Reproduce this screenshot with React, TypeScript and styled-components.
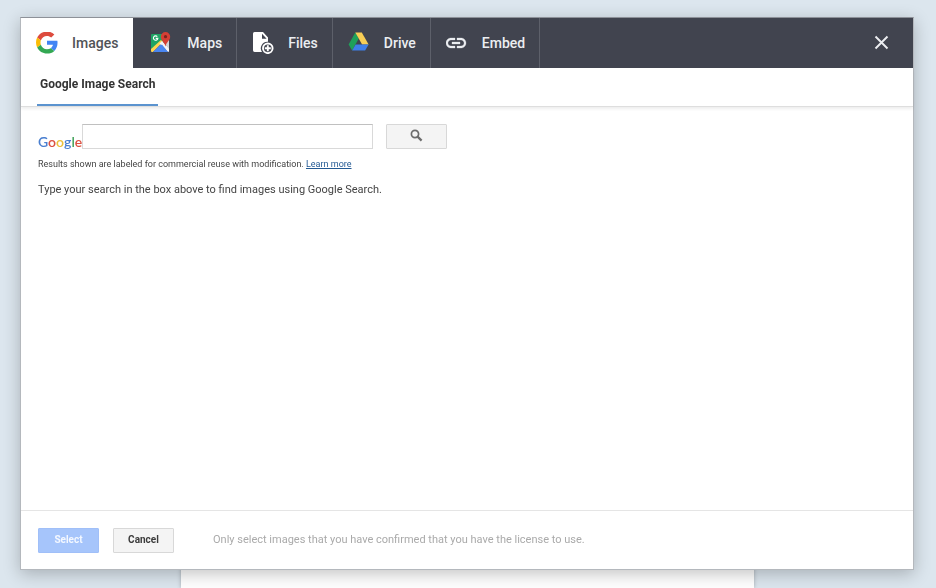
import React from "react";
import styled, { createGlobalStyle, css } from "styled-components";

const GlobalStyle = createGlobalStyle`
  *, *::before, *::after { box-sizing: border-box; }
  html, body, #root { height: 100%; }
  body {
    margin: 0;
    background: #dce6ee;
    font-family: Roboto, "Liberation Sans", sans-serif;
    color: #444;
  }
  button, input { font: inherit; }
`;

const Page = styled.div`
  height: 100%;
  padding: 100px 182px 0 181px;
  overflow: hidden;
`;

const Sheet = styled.div`
  height: 100%;
  background: #fff;
  box-shadow: 0 0 4px rgba(0, 0, 0, 0.25);
`;

const Overlay = styled.div`
  position: fixed;
  inset: 0;
  display: flex;
  padding: 17px 22px 18px 20px;
`;

const Dialog = styled.section`
  flex: 1;
  min-width: 0;
  display: flex;
  flex-direction: column;
  background: #fff;
  border: 1px solid #b4b8bd;
  border-top-color: #8d9198;
  box-shadow: 0 4px 16px rgba(0, 0, 0, 0.24);
`;

const Header = styled.header`
  display: flex;
  height: 50px;
  flex: none;
  background: #41444f;
`;

const TabList = styled.nav`
  display: flex;
`;

const Tab = styled.button<{ $active?: boolean }>`
  display: flex;
  align-items: center;
  gap: 14px;
  padding: 0 14px 0 15px;
  border: 0;
  border-right: 1px solid #5d606a;
  background: transparent;
  color: #eceef1;
  font-size: 14px;
  font-weight: 500;
  line-height: 20px;
  cursor: pointer;
  ${(p) =>
    p.$active &&
    css`
      background: #fff;
      border-right-color: #fff;
      color: #505357;
    `}
`;

const TabIcon = styled.svg<{ $wide?: boolean }>`
  width: ${(p) => (p.$wide ? 25 : 22)}px;
  height: 22px;
  flex: none;
`;

const CloseButton = styled.button`
  display: flex;
  align-items: center;
  margin-left: auto;
  padding: 0 24px 2px;
  border: 0;
  background: transparent;
  color: #eceef1;
  cursor: pointer;
`;

const SubNav = styled.nav`
  display: flex;
  flex: none;
  height: 39px;
  padding: 0 16px;
  border-bottom: 1px solid #dedede;
  box-shadow: 0 2px 3px rgba(0, 0, 0, 0.07);
`;

const SubTab = styled.button`
  padding: 0 3px 4px;
  border: 0;
  border-bottom: 2px solid #5b93cf;
  background: transparent;
  color: #333;
  font-size: 12px;
  font-weight: 700;
  line-height: 16px;
  cursor: pointer;
`;

const Content = styled.main`
  flex: 1;
  min-height: 0;
  padding: 17px;
`;

const SearchForm = styled.form`
  display: flex;
  align-items: flex-end;
`;

const Brand = styled.span`
  width: 44px;
  font-family: Lato, sans-serif;
  font-size: 14px;
  font-weight: 600;
  line-height: 14px;
`;

const Letter = styled.span<{ $color: string }>`
  color: ${(p) => p.$color};
`;

const SearchInput = styled.input`
  flex: 0 1 291px;
  min-width: 0;
  height: 25px;
  padding: 0 8px;
  border: 1px solid #d9d9d9;
  border-top-color: #c0c0c0;
  background: #fff;
  font-size: 13px;
`;

const Button = styled.button<{ $primary?: boolean }>`
  display: flex;
  align-items: center;
  justify-content: center;
  width: 61px;
  height: 25px;
  padding: 0;
  border: 1px solid #d8d8d8;
  border-radius: 1px;
  background: #f4f4f4;
  color: #3c3c3c;
  font-size: 10px;
  font-weight: 700;
  line-height: 12px;
  cursor: pointer;
  ${(p) =>
    p.$primary &&
    css`
      background: #a6c5fb;
      border-color: #a0bff8;
      color: #f4f8ff;
    `}
`;

const SearchButton = styled(Button)`
  margin-left: 13px;
  padding-bottom: 2px;
  color: #6c6c6c;
`;

const Note = styled.p`
  margin: 9px 0 0;
  font-size: 9px;
  line-height: 12px;
`;

const NoteLink = styled.a`
  color: #245a94;
`;

const Prompt = styled.p`
  margin: 12px 0 0;
  font-size: 11px;
  line-height: 16px;
`;

const Footer = styled.footer`
  display: flex;
  flex: none;
  align-items: center;
  gap: 14px;
  height: 59px;
  padding: 0 17px;
  border-top: 1px solid #e5e5e5;
`;

const License = styled.span`
  margin-left: 25px;
  color: #aaa;
  font-size: 11px;
  line-height: 16px;
`;

const GoogleIcon = () => (
  <TabIcon viewBox="0 1 48 48" aria-hidden="true">
    <path fill="#DD4B3E" d="M24 9.500c3.540 0 6.710 1.220 9.210 3.600l6.850-6.850C35.900 2.380 30.470 0 24 0 14.620 0 6.510 5.380 2.560 13.220l7.980 6.190C12.430 13.720 17.740 9.500 24 9.500z" />
    <path fill="#4285F4" d="M46.980 24.550c0-1.570-.15-3.090-.38-4.550H24v9.020h12.940c-.58 2.960-2.260 5.480-4.780 7.180l7.730 6c4.510-4.180 7.090-10.360 7.090-17.650z" />
    <path fill="#FBBC05" d="M10.530 28.590c-.48-1.450-.76-2.990-.76-4.590s.27-3.140.76-4.590l-7.980-6.190C.92 16.460 0 20.120 0 24s.92 7.540 2.560 10.780l7.970-6.190z" />
    <path fill="#34A853" d="M24 48c6.480 0 11.930-2.130 15.890-5.810l-7.730-6c-2.150 1.450-4.920 2.300-8.160 2.300-6.260 0-11.570-4.220-13.470-9.910l-7.980 6.190C6.510 42.620 14.620 48 24 48z" />
  </TabIcon>
);

const MapsIcon = () => (
  <TabIcon $wide viewBox="-1 1 25 22" aria-hidden="true">
    <path fill="#1fa463" d="M3 3h11v8L2 19V4a1 1 0 0 1 1-1z" />
    <path fill="#ffd34e" d="M2 18L12 9l2 2L4 21H3a1 1 0 0 1-1-1z" />
    <path fill="#4a86f0" d="M4 21l8-8 7 8z" />
    <path fill="#f4f4f4" d="M10.500 12.500L13 10l7 7v3a1 1 0 0 1-1 1z" />
    <path fill="#4a86f0" d="M4.500 21l6.500-6.500 2-1 6 7.500z" />
    <path fill="#d0d4d8" d="M16 13l2-4h2v9z" />
    <path fill="none" stroke="#fff" strokeWidth="1.200" d="M8.300 5.600A2.200 2.200 0 1 0 8.800 7.400H6.700" />
    <path fill="#d63f35" d="M16.500 1a4.700 4.700 0 0 0-4.700 4.700c0 4 3.900 5 4.700 9.800.8-4.800 4.700-5.800 4.700-9.800A4.700 4.700 0 0 0 16.500 1z" />
    <circle cx="16.500" cy="5.700" r="1.600" fill="#7c231d" />
  </TabIcon>
);

const FilesIcon = () => (
  <TabIcon viewBox="0 0 22 22" aria-hidden="true">
    <path fill="#fff" d="M2.500 0h8.500l5 5.500v4.200a6.600 6.600 0 0 0-6 10.300H3A1.800 1.800 0 0 1 1 18.200V1.800A1.800 1.800 0 0 1 2.500 0z" />
    <path fill="#41444f" d="M10 1.800V6.700h4.600z" />
    <circle cx="15.800" cy="16.300" r="4.800" fill="none" stroke="#fff" strokeWidth="1.900" />
    <path stroke="#fff" strokeWidth="1.900" d="M15.800 13.300v6M12.800 16.300h6" />
  </TabIcon>
);

const DriveIcon = () => (
  <TabIcon viewBox="1 1 22 22" aria-hidden="true">
    <path fill="#1fa05a" d="M8.300 1.500l3.500 6L5.100 19.500 1.600 13.500z" />
    <path fill="#f8ce55" d="M8.300 1.500h6.500l6.800 12h-6.500z" />
    <path fill="#3f7fe8" d="M8.600 13.500h13l-3.500 6h-13z" />
  </TabIcon>
);

const LinkIcon = () => (
  <TabIcon viewBox="2 1 22 22" aria-hidden="true">
    <path fill="#eceef1" stroke="#eceef1" strokeWidth="0.300" d="M3.900 12c0-1.710 1.390-3.100 3.100-3.100h4V7H7c-2.760 0-5 2.240-5 5s2.240 5 5 5h4v-1.900H7c-1.710 0-3.100-1.390-3.100-3.100zM8 13h8v-2H8v2zm9-6h-4v1.900h4c1.710 0 3.100 1.390 3.100 3.100s-1.390 3.100-3.100 3.100h-4V17h4c2.760 0 5-2.240 5-5s-2.240-5-5-5z" />
  </TabIcon>
);

const tabs = [
  { label: "Images", Icon: GoogleIcon },
  { label: "Maps", Icon: MapsIcon },
  { label: "Files", Icon: FilesIcon },
  { label: "Drive", Icon: DriveIcon },
  { label: "Embed", Icon: LinkIcon },
];

const brandLetters: [string, string][] = [
  ["G", "#4a7fd0"],
  ["o", "#dc5040"],
  ["o", "#ecc03c"],
  ["g", "#4a7fd0"],
  ["l", "#45a45c"],
  ["e", "#dc5040"],
];

export default function App() {
  const [active, setActive] = React.useState("Images");
  return (
    <>
      <GlobalStyle />
      <Page>
        <Sheet />
      </Page>
      <Overlay>
        <Dialog role="dialog" aria-label="Insert content">
          <Header>
            <TabList>
              {tabs.map(({ label, Icon }) => (
                <Tab key={label} type="button" $active={active === label} onClick={() => setActive(label)}>
                  <Icon />
                  {label}
                </Tab>
              ))}
            </TabList>
            <CloseButton type="button" aria-label="Close">
              <svg width="15" height="15" viewBox="0 0 15 15" aria-hidden="true">
                <path d="M1.500 1.500l12 12M13.500 1.500l-12 12" stroke="currentColor" strokeWidth="1.900" />
              </svg>
            </CloseButton>
          </Header>
          <SubNav>
            <SubTab type="button">Google Image Search</SubTab>
          </SubNav>
          <Content>
            <SearchForm onSubmit={(e) => e.preventDefault()}>
              <Brand>
                {brandLetters.map(([letter, color], i) => (
                  <Letter key={i} $color={color}>{letter}</Letter>
                ))}
              </Brand>
              <SearchInput type="text" aria-label="Search images" />
              <SearchButton type="submit" aria-label="Search">
                <svg width="13" height="13" viewBox="0 0 13 13" fill="none" stroke="currentColor" aria-hidden="true">
                  <circle cx="5" cy="5" r="3.600" strokeWidth="1.700" />
                  <path d="M7.600 7.600l4 4" strokeWidth="2.200" />
                </svg>
              </SearchButton>
            </SearchForm>
            <Note>
              Results shown are labeled for commercial reuse with modification.{" "}
              <NoteLink href="#learn-more">Learn more</NoteLink>
            </Note>
            <Prompt>Type your search in the box above to find images using Google Search.</Prompt>
          </Content>
          <Footer>
            <Button type="button" $primary>Select</Button>
            <Button type="button">Cancel</Button>
            <License>Only select images that you have confirmed that you have the license to use.</License>
          </Footer>
        </Dialog>
      </Overlay>
    </>
  );
}
